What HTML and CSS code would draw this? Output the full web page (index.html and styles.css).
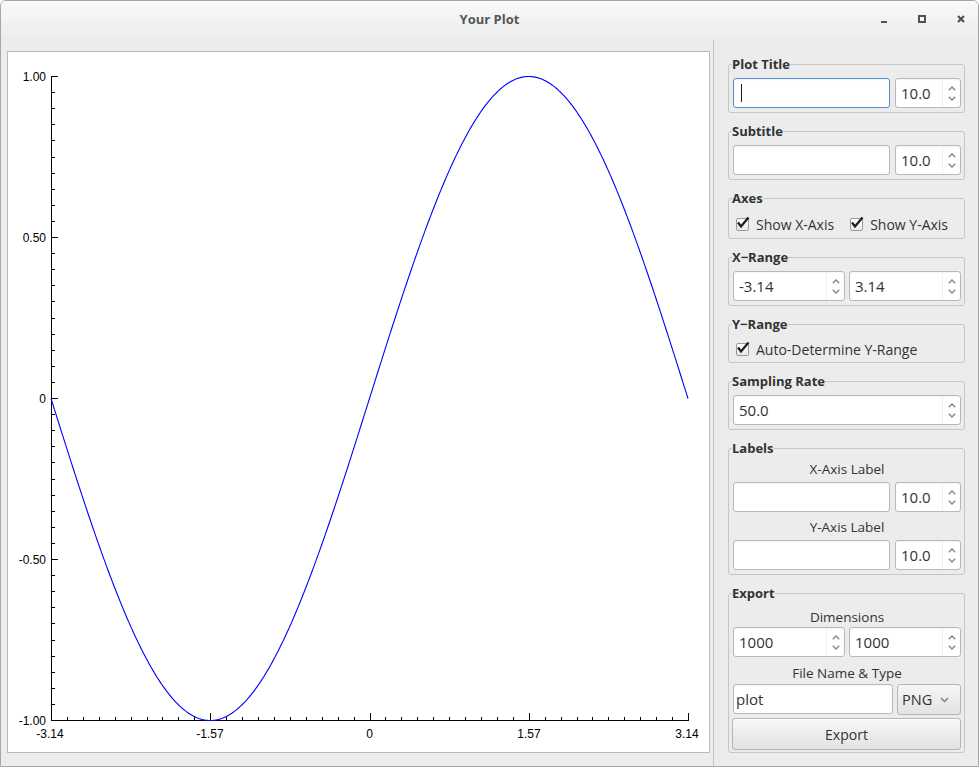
FILE: index.html
```html
<!DOCTYPE html>
<html>
<head>
<meta charset="utf-8">
<title>Your Plot</title>
<link rel="stylesheet" href="styles.css">
</head>
<body>
<div class="window">
  <header class="titlebar">
    <div class="title">Your Plot</div>
    <div class="controls">
      <span class="ctl ctl-min"></span>
      <span class="ctl ctl-max"></span>
      <svg class="ctl ctl-close" width="8" height="8" viewBox="0 0 8 8"><path d="M1 1L7 7M7 1L1 7" stroke="#4c5457" stroke-width="2.2" fill="none"/></svg>
    </div>
  </header>
  <div class="main">
    <div class="plot-area">
      <div class="plot-box">
        <svg class="plot" id="plot" width="701" height="700" viewBox="8 52 701 700">
          <g id="ticks" class="axis" shape-rendering="crispEdges">
            <path d="M51.5 76V720.5H689"/>
          </g>
          <path id="curve" class="curve" d=""/>
          <g class="ticklabels ylabels">
            <text x="46" y="81">1.00</text>
            <text x="46" y="242">0.50</text>
            <text x="46" y="403">0</text>
            <text x="46" y="564">-0.50</text>
            <text x="46" y="725">-1.00</text>
          </g>
          <g class="ticklabels xlabels">
            <text x="50" y="738">-3.14</text>
            <text x="210" y="738">-1.57</text>
            <text x="369.5" y="738">0</text>
            <text x="529" y="738">1.57</text>
            <text x="687" y="738">3.14</text>
          </g>
        </svg>
      </div>
    </div>
    <div class="divider"></div>
    <div class="panel">

      <fieldset class="group">
        <legend>Plot Title</legend>
        <div class="row">
          <div class="field text focus"><span class="caret"></span></div>
          <div class="field spin small"><span class="val">10.0</span><span class="arrows"><svg width="8" height="5" viewBox="0 0 8 5"><path d="M0.8 4.2L4 1L7.2 4.2"/></svg><svg width="8" height="5" viewBox="0 0 8 5"><path d="M0.8 0.8L4 4L7.2 0.8"/></svg></span></div>
        </div>
      </fieldset>

      <fieldset class="group">
        <legend>Subtitle</legend>
        <div class="row">
          <div class="field text"></div>
          <div class="field spin small"><span class="val">10.0</span><span class="arrows"><svg width="8" height="5" viewBox="0 0 8 5"><path d="M0.8 4.2L4 1L7.2 4.2"/></svg><svg width="8" height="5" viewBox="0 0 8 5"><path d="M0.8 0.8L4 4L7.2 0.8"/></svg></span></div>
        </div>
      </fieldset>

      <fieldset class="group g-axes">
        <legend>Axes</legend>
        <div class="checks tall">
          <label class="check"><span class="box"><svg width="12" height="12" viewBox="0 0 12 12"><path d="M2 4.5L5 8.5L12.5 -0.5"/></svg></span>Show X-Axis</label>
          <label class="check"><span class="box"><svg width="12" height="12" viewBox="0 0 12 12"><path d="M2 4.5L5 8.5L12.5 -0.5"/></svg></span>Show Y-Axis</label>
        </div>
      </fieldset>

      <fieldset class="group">
        <legend>X−Range</legend>
        <div class="row half">
          <div class="field spin"><span class="val">-3.14</span><span class="arrows"><svg width="8" height="5" viewBox="0 0 8 5"><path d="M0.8 4.2L4 1L7.2 4.2"/></svg><svg width="8" height="5" viewBox="0 0 8 5"><path d="M0.8 0.8L4 4L7.2 0.8"/></svg></span></div>
          <div class="field spin"><span class="val">3.14</span><span class="arrows"><svg width="8" height="5" viewBox="0 0 8 5"><path d="M0.8 4.2L4 1L7.2 4.2"/></svg><svg width="8" height="5" viewBox="0 0 8 5"><path d="M0.8 0.8L4 4L7.2 0.8"/></svg></span></div>
        </div>
      </fieldset>

      <fieldset class="group g-yrange">
        <legend>Y−Range</legend>
        <div class="checks">
          <label class="check"><span class="box"><svg width="12" height="12" viewBox="0 0 12 12"><path d="M2 4.5L5 8.5L12.5 -0.5"/></svg></span>Auto-Determine Y-Range</label>
        </div>
      </fieldset>

      <fieldset class="group">
        <legend>Sampling Rate</legend>
        <div class="row">
          <div class="field spin"><span class="val">50.0</span><span class="arrows"><svg width="8" height="5" viewBox="0 0 8 5"><path d="M0.8 4.2L4 1L7.2 4.2"/></svg><svg width="8" height="5" viewBox="0 0 8 5"><path d="M0.8 0.8L4 4L7.2 0.8"/></svg></span></div>
        </div>
      </fieldset>

      <fieldset class="group g-labels">
        <legend>Labels</legend>
        <div class="caption">X-Axis Label</div>
        <div class="row after-cap">
          <div class="field text"></div>
          <div class="field spin small"><span class="val">10.0</span><span class="arrows"><svg width="8" height="5" viewBox="0 0 8 5"><path d="M0.8 4.2L4 1L7.2 4.2"/></svg><svg width="8" height="5" viewBox="0 0 8 5"><path d="M0.8 0.8L4 4L7.2 0.8"/></svg></span></div>
        </div>
        <div class="caption cap2">Y-Axis Label</div>
        <div class="row after-cap">
          <div class="field text"></div>
          <div class="field spin small"><span class="val">10.0</span><span class="arrows"><svg width="8" height="5" viewBox="0 0 8 5"><path d="M0.8 4.2L4 1L7.2 4.2"/></svg><svg width="8" height="5" viewBox="0 0 8 5"><path d="M0.8 0.8L4 4L7.2 0.8"/></svg></span></div>
        </div>
      </fieldset>

      <fieldset class="group g-export">
        <legend>Export</legend>
        <div class="caption">Dimensions</div>
        <div class="row half dims">
          <div class="field spin"><span class="val">1000</span><span class="arrows"><svg width="8" height="5" viewBox="0 0 8 5"><path d="M0.8 4.2L4 1L7.2 4.2"/></svg><svg width="8" height="5" viewBox="0 0 8 5"><path d="M0.8 0.8L4 4L7.2 0.8"/></svg></span></div>
          <div class="field spin"><span class="val">1000</span><span class="arrows"><svg width="8" height="5" viewBox="0 0 8 5"><path d="M0.8 4.2L4 1L7.2 4.2"/></svg><svg width="8" height="5" viewBox="0 0 8 5"><path d="M0.8 0.8L4 4L7.2 0.8"/></svg></span></div>
        </div>
        <div class="caption cap-file">File Name &amp; Type</div>
        <div class="row file">
          <div class="field text"><span class="val">plot</span></div>
          <div class="combo"><span>PNG</span><svg width="9" height="6" viewBox="0 0 9 6"><path d="M1 1L4.5 4.5L8 1"/></svg></div>
        </div>
        <button class="btn" type="button">Export</button>
      </fieldset>

    </div>
  </div>
</div>
<script src="script.js"></script>
</body>
</html>
```

FILE: styles.css
```css
* { box-sizing: border-box; }
html, body { margin: 0; padding: 0; background: #ffffff; }
body {
  width: 980px;
  height: 767px;
  overflow: hidden;
  font-family: "Open Sans", "Noto Sans", sans-serif;
  color: #2e3436;
}

.window {
  width: 979px;
  height: 767px;
  border: 1px solid #a7a7a7;
  border-radius: 6px 6px 0 0;
  background: #ececec;
  display: flex;
  flex-direction: column;
  overflow: hidden;
}

.titlebar {
  height: 36px;
  flex: none;
  display: grid;
  grid-template-columns: 1fr auto 1fr;
  align-items: center;
  background: linear-gradient(#f9f9f9, #ededed);
}
.title {
  grid-column: 2;
  font-size: 13px;
  font-weight: bold;
  color: #535758;
}
.controls {
  grid-column: 3;
  justify-self: end;
  display: flex;
  align-items: center;
  gap: 31px;
  padding-right: 13px;
}
.ctl { display: block; flex: none; }
.ctl-min { width: 6px; height: 2px; background: #4c5457; margin-top: 6px; }
.ctl-max { width: 8px; height: 8px; border: 2px solid #4c5457; }
.ctl-close { width: 8px; height: 8px; }

.main { flex: 1; display: flex; min-height: 0; }

.plot-area {
  width: 712px;
  flex: none;
  padding: 14px 3px 13px 6px;
}
.plot-box {
  height: 100%;
  background: #ffffff;
  border: 1px solid #b9b9b9;
}
.plot { display: block; }
.axis path { stroke: #000; stroke-width: 1; fill: none; }
.curve { fill: none; stroke: #0000ff; stroke-width: 1.1; }
.ticklabels text {
  font-family: "Liberation Sans", Arial, sans-serif;
  font-size: 12px;
  fill: #000;
}
.ylabels { text-anchor: end; }
.xlabels { text-anchor: middle; }

.divider { width: 1px; flex: none; background: #c3c3c3; margin-top: 3px; }

.panel {
  flex: 1;
  padding: 19px 13px 0 14px;
}

.group {
  margin: 0 0 10px;
  padding: 6px 3px 4px 4px;
  border: 1px solid #c6c6c6;
  border-radius: 3px;
  min-width: 0;
}
.group legend {
  padding: 0;
  margin-left: -1px;
  font-size: 13px;
  font-weight: bold;
  line-height: 16px;
  color: #2e3436;
}
.g-axes { padding-bottom: 2px; }
.g-yrange { padding-bottom: 2px; }
.g-labels { padding-top: 4px; }
.g-export { padding-top: 7px; padding-bottom: 2px; }

.row { display: flex; gap: 5px; }
.row.half { gap: 4px; }
.row.half .field { flex: 1; }
.row.file { gap: 4px; margin-top: 2px; }
.row.after-cap { margin-top: 4px; }
.row.dims { margin-top: 1px; }

.field {
  height: 30px;
  background: #ffffff;
  border: 1px solid #b8b8b8;
  border-radius: 3px;
  box-shadow: inset 0 1px 1px rgba(0, 0, 0, 0.04);
  display: flex;
  align-items: center;
  font-size: 15px;
  color: #2e3436;
}
.field.text { flex: 1; padding-left: 4px; }
.field.focus { border-color: #4a90d9; }
.caret { display: block; width: 1px; height: 18px; background: #1c1c1c; margin-left: 3px; }
.field .val { flex: 1; padding-left: 5px; white-space: nowrap; }
.field.text .val { padding-left: 0; }
.field.spin { flex: 1; }
.field.spin.small { flex: none; width: 66px; }
.arrows {
  flex: none;
  width: 18px;
  height: 100%;
  display: flex;
  flex-direction: column;
  align-items: center;
  justify-content: space-around;
  padding: 4px 0 4px;
  border-left: 1px solid #f0f0f0;
}
.arrows svg { display: block; }
.arrows path, .combo path { fill: none; stroke: #8c8c8c; stroke-width: 1.5; }

.checks { display: flex; align-items: center; height: 22px; gap: 16px; padding-left: 3px; }
.checks.tall { height: 24px; }
.check { display: flex; align-items: center; gap: 7px; font-size: 14px; white-space: nowrap; }
.box {
  width: 13px;
  height: 13px;
  border: 1px solid #9a9a9a;
  border-radius: 2px;
  background: linear-gradient(#ffffff, #e9e9e9);
  display: block;
  flex: none;
}
.box svg { display: block; overflow: visible; margin: -1px 0 0 -1px; }
.box path { fill: none; stroke: #1e1e1e; stroke-width: 2.3; }

.caption {
  text-align: center;
  font-size: 13.5px;
  line-height: 18px;
  color: #2e3436;
}
.cap2 { margin-top: 6px; }
.cap-file { margin-top: 7px; }

.row.file .field.text { padding-left: 2px; }
.combo {
  flex: none;
  width: 64px;
  height: 31px;
  border: 1px solid #b6b6b6;
  border-radius: 3px;
  background: linear-gradient(#f6f6f6, #e3e3e3);
  display: flex;
  align-items: center;
  justify-content: space-between;
  padding: 0 11px 0 4px;
  font-size: 14.5px;
}
.combo path { stroke: #7d7d7d; }

.btn {
  display: block;
  width: calc(100% + 1px);
  margin: 3px 0 0 -1px;
  height: 32px;
  border: 1px solid #b4b4b4;
  border-radius: 3px;
  background: linear-gradient(#f7f7f7, #e2e2e2);
  box-shadow: inset 0 1px 0 #ffffff;
  font-family: "Open Sans", "Noto Sans", sans-serif;
  font-size: 14px;
  color: #2e3436;
  padding: 0;
}
```

FILE: script.js
```js
(function () {
  var ticks = document.getElementById('ticks');
  var NS = 'http://www.w3.org/2000/svg';
  var d = '';
  var i, y, x, len;
  for (i = 0; i <= 40; i++) {
    y = Math.round(76 + 644 * i / 40) + 0.5;
    len = (i % 10 === 0) ? 6 : 3;
    d += 'M52 ' + y + 'h' + len;
  }
  for (i = 0; i <= 40; i++) {
    x = Math.round(51 + 637 * i / 40) + 0.5;
    len = (i % 10 === 0) ? 7 : 3;
    d += 'M' + x + ' 720V' + (720 - len);
  }
  var p = document.createElementNS(NS, 'path');
  p.setAttribute('d', d);
  ticks.appendChild(p);

  var N = 500, c = '';
  for (i = 0; i <= N; i++) {
    var t = -Math.PI + 2 * Math.PI * i / N;
    x = 51 + 637 * i / N;
    y = 398.5 - 322 * Math.sin(t);
    c += (i === 0 ? 'M' : 'L') + x.toFixed(2) + ' ' + y.toFixed(2);
  }
  document.getElementById('curve').setAttribute('d', c);
})();
```
